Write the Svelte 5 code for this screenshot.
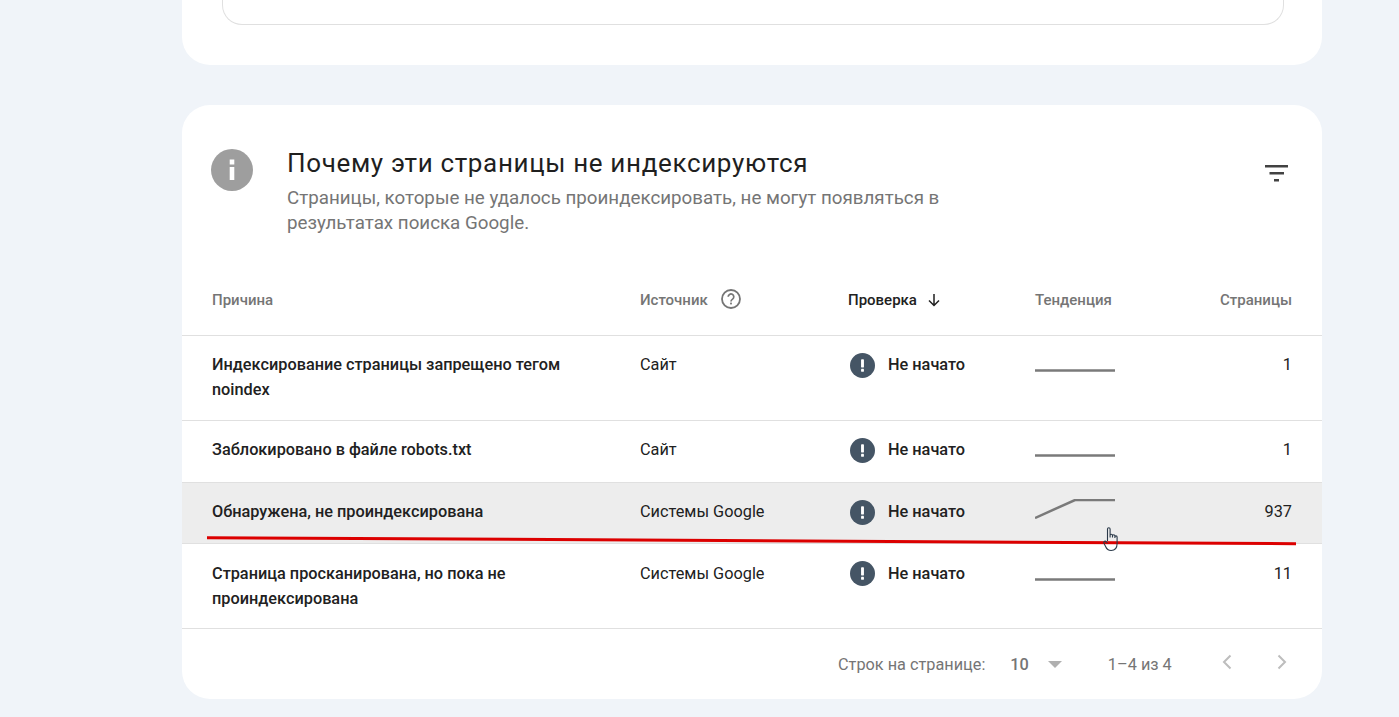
<script>
    const rows = [
        { reason: 'Индексирование страницы запрещено тегом noindex', source: 'Сайт', pages: '1', line: '0,18.500 80,18.500', cls: 'tall' },
        { reason: 'Заблокировано в файле robots.txt', source: 'Сайт', pages: '1', line: '0,18.500 80,18.500', cls: 'short' },
        { reason: 'Обнаружена, не проиндексирована', source: 'Системы Google', pages: '937', line: '0,19 40,1 80,1', cls: 'short hover' },
        { reason: 'Страница просканирована, но пока не проиндексирована', source: 'Системы Google', pages: '11', line: '0,18.500 80,18.500', cls: 'tall last' }
    ];
</script>

<div class="page">
    <section class="card top">
        <div class="inner"></div>
    </section>

    <section class="card main">
        <header class="head">
            <div class="info">
                <svg width="42" height="42" viewBox="0 0 42 42">
                    <circle cx="21" cy="21" r="21" fill="#9e9e9e" />
                    <rect x="18.700" y="10.500" width="4.600" height="5" fill="#fff" />
                    <rect x="18.700" y="18" width="4.600" height="13" fill="#fff" />
                </svg>
            </div>
            <div class="titles">
                <h2>Почему эти страницы не индексируются</h2>
                <p>Страницы, которые не удалось проиндексировать, не могут появляться в результатах поиска Google.</p>
            </div>
            <svg class="filter" width="24" height="24" viewBox="0 0 24 24">
                <path d="M0 4h23v2.600H0zM4.500 11h14.500v2.600H4.500zM9 18h5v2.600H9z" fill="#424242" />
            </svg>
        </header>

        <div class="table">
            <div class="row th">
                <div>Причина</div>
                <div class="with-icon gap-help">
                    Источник
                    <svg class="help" width="22" height="22" viewBox="0 0 22 22" fill="none">
                        <circle cx="11" cy="11" r="9" stroke="#757575" stroke-width="1.800" />
                        <path d="M8.200 8.800a2.800 2.800 0 1 1 4.400 2.300c-1 .7-1.600 1.200-1.600 2.400" stroke="#757575" stroke-width="1.700" />
                        <rect x="10.100" y="14.600" width="1.800" height="1.800" fill="#757575" />
                    </svg>
                </div>
                <div class="with-icon sorted">
                    Проверка
                    <svg width="16" height="16" viewBox="0 0 16 16" fill="none">
                        <path d="M8 2v11M3 8.500l5 5 5-5" stroke="#212121" stroke-width="1.500" />
                    </svg>
                </div>
                <div>Тенденция</div>
                <div class="num">Страницы</div>
            </div>

            {#each rows as row}
                <div class="row {row.cls}">
                    <div class="reason">{row.reason}</div>
                    <div>{row.source}</div>
                    <div class="status">
                        <svg width="25" height="25" viewBox="0 0 26 26">
                            <circle cx="13" cy="13" r="13" fill="#455565" />
                            <rect x="11.500" y="6.500" width="3" height="8.500" rx="0.500" fill="#fff" />
                            <rect x="11.500" y="16.500" width="3" height="3" rx="0.500" fill="#fff" />
                        </svg>
                        <span>Не начато</span>
                    </div>
                    <svg class="spark" width="80" height="20" viewBox="0 0 80 20" fill="none">
                        <polyline points={row.line} stroke="#7a7a7a" stroke-width="2.500" />
                    </svg>
                    <div class="num">{row.pages}</div>
                </div>
            {/each}

            <svg class="mark" width="1100" height="16" viewBox="0 0 1100 16">
                <path d="M5 2.700 L1094 8.700" stroke="#dc0000" stroke-width="3" fill="none" />
            </svg>

            <svg class="cursor" width="18" height="26" viewBox="0 0 16 26" fill="none">
                <path d="M4.500 15V3a1.300 1.300 0 0 1 2.600 0v8.500M7.100 9.500a1.200 1.200 0 0 1 2.400 0v2M9.500 10a1.200 1.200 0 0 1 2.400 0v2M11.900 11a1.100 1.100 0 0 1 2.200 0v6.500c0 4-2 7-6 7-3 0-4.500-1.500-5.500-4L.8 17c-.4-1.500 1.400-2.500 2.500-1.200l1.200 1.400" stroke="#2b3a4a" stroke-width="1.100" />
            </svg>
        </div>

        <footer class="foot">
            <span class="rows-label">Строк на странице:</span>
            <span class="size">10</span>
            <svg class="caret" width="14" height="7" viewBox="0 0 14 7"><path d="M0 0h14L7 7z" fill="#b0b0b0" /></svg>
            <span class="range">1–4 из 4</span>
            <svg class="prev" width="10" height="16" viewBox="0 0 10 16" fill="none"><path d="M8.500 1.500 2 8l6.500 6.500" stroke="#bdbdbd" stroke-width="2" /></svg>
            <svg class="next" width="10" height="16" viewBox="0 0 10 16" fill="none"><path d="M1.500 1.500 8 8l-6.500 6.500" stroke="#bdbdbd" stroke-width="2" /></svg>
        </footer>
    </section>
</div>

<style>
    :global(body) {
        background: #f0f4f9;
        font-family: Roboto, "Liberation Sans", sans-serif;
        color: #212121;
        overflow: hidden;
    }

    .page {
        width: 1140px;
        margin-left: 182px;
        display: flex;
        flex-direction: column;
        gap: 40px;
    }

    .card {
        background: #fff;
        border-radius: 0 0 28px 28px;
    }

    .top {
        padding: 0 38px 40px 40px;
    }

    .inner {
        height: 25px;
        box-sizing: border-box;
        border: 1px solid #e0e0e0;
        border-top: none;
        border-radius: 0 0 20px 20px;
    }

    .main {
        border-radius: 28px;
        height: 594px;
        display: flex;
        flex-direction: column;
    }

    .head {
        display: flex;
        align-items: flex-start;
        padding: 44px 33px 0 29px;
        height: 130px;
        box-sizing: border-box;
    }

    .info {
        height: 42px;
        margin-right: 34px;
    }

    .titles {
        width: 670px;
        flex: none;
    }

    h2 {
        margin: -1px 0 0;
        font-size: 26px;
        font-weight: 400;
        letter-spacing: 0.650px;
        line-height: 30px;
        color: #1f1f1f;
    }

    p {
        margin: 8px 0 0;
        font-size: 18.750px;
        line-height: 25px;
        color: #757575;
    }

    .filter {
        margin-left: auto;
        margin-top: 12px;
    }

    .table {
        position: relative;
        font-size: 16.300px;
    }

    .row {
        display: grid;
        grid-template-columns: 428px 208px 187px 1fr 120px;
        padding: 0 30px;
        border-bottom: 1px solid #e0e0e0;
        align-items: start;
    }

    .th {
        height: 101px;
        align-items: center;
        font-size: 15px;
        font-weight: 500;
        color: #757575;
        box-sizing: border-box;
    }

    .th > div {
        margin-top: 29px;
    }

    .with-icon {
        display: flex;
        align-items: center;
    }

    .gap-help {
        gap: 13px;
    }

    .help {
        margin: -2px 0 0 -1px;
    }

    .sorted {
        color: #212121;
        gap: 9px;
    }

    .tall {
        height: 84px;
    }

    .short {
        height: 61px;
    }

    .hover {
        height: 60px;
        background: #ededed;
    }

    .row:not(.th) > * {
        margin-top: 16px;
    }

    .last:not(.th) > div,
    .last:not(.th) > .spark {
        margin-top: 17px;
    }

    .reason {
        font-weight: 500;
        line-height: 25px;
        width: 370px;
    }

    .row:not(.th) > div:not(.reason) {
        line-height: 25px;
    }

    .row:not(.th) > .status {
        display: flex;
        align-items: center;
        gap: 13px;
        font-weight: 500;
        margin-left: 2px;
        margin-top: 16px;
    }

    .status span {
        margin-bottom: 1px;
    }

    .last .status span {
        margin-top: 1px;
        margin-bottom: 0;
    }

    .num {
        text-align: right;
    }

    .mark {
        position: absolute;
        left: 20px;
        top: 300px;
    }

    .cursor {
        position: absolute;
        left: 920px;
        top: 291px;
    }

    .foot {
        flex: 1;
        display: flex;
        align-items: center;
        padding-left: 656px;
        font-size: 16.300px;
        color: #757575;
    }

    .size {
        margin-left: 25px;
        font-weight: 500;
    }

    .caret {
        margin-left: 19px;
    }

    .range {
        margin-left: 46px;
    }

    .prev {
        margin-left: 50px;
        margin-top: -4px;
    }

    .next {
        margin-left: 45px;
        margin-top: -4px;
    }
</style>
